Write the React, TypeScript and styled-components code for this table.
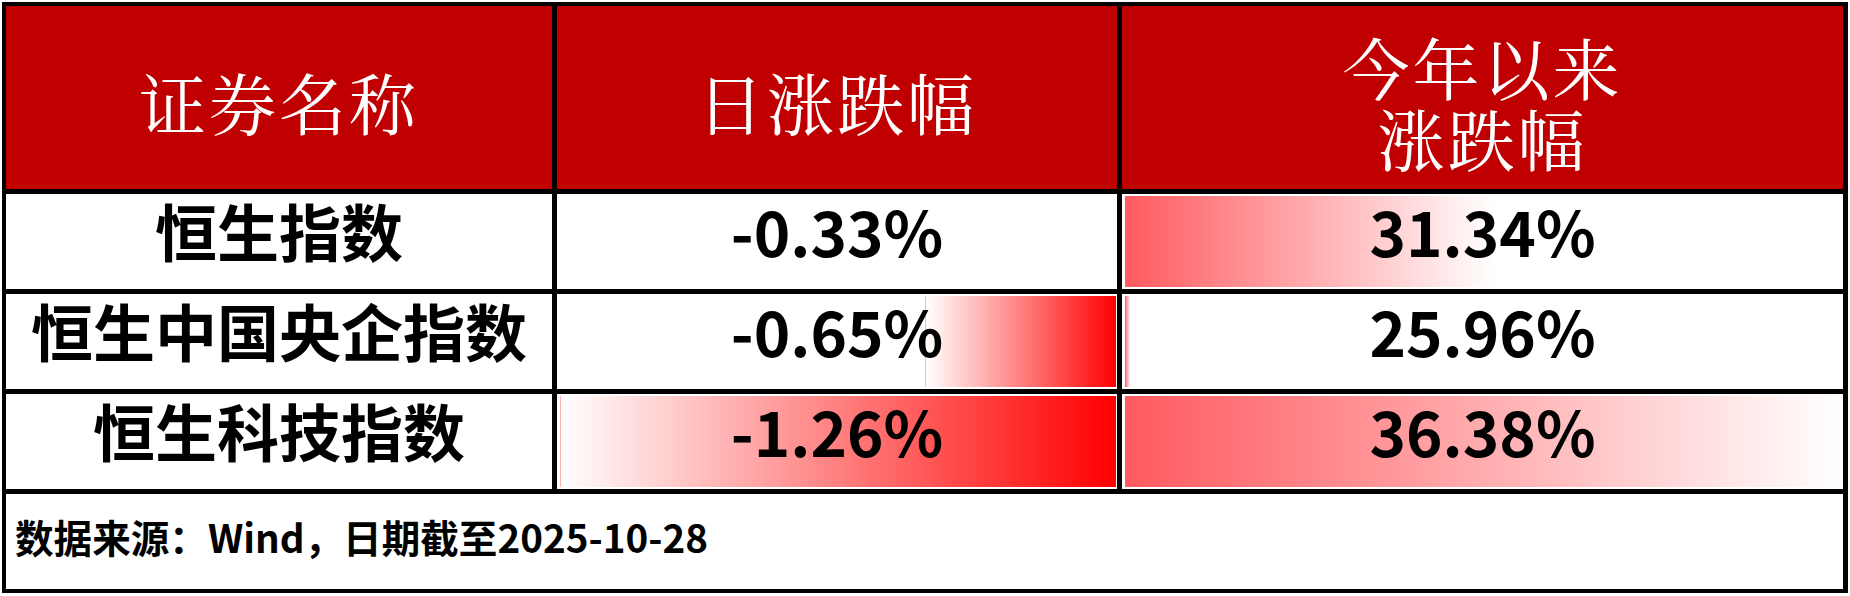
import { Fragment } from "react";
import styled, { createGlobalStyle } from "styled-components";

const GlobalStyle = createGlobalStyle`
  html, body {
    margin: 0;
    padding: 0;
    background: #fff;
  }
`;

const SANS = `"Noto Sans CJK SC", "Noto Sans", sans-serif`;
const SERIF = `"Noto Serif CJK SC", "AR PL UMing CN", "Noto Sans CJK SC", serif`;

const Table = styled.div`
  display: grid;
  grid-template-columns: 546px 560px 721px;
  grid-template-rows: 183px 95px 95px 95px 95px;
  gap: 5px;
  width: max-content;
  margin: 2px 0 0 2px;
  padding: 4px 5px 4px 4px;
  background: #000;
`;

const HeadCell = styled.div`
  display: flex;
  flex-direction: column;
  align-items: center;
  justify-content: center;
  padding-top: 8px;
  box-sizing: border-box;
  background: #c00000;
  color: #fff;
  font-family: ${SERIF};
  font-size: 67px;
  line-height: 71px;
  text-align: center;
  letter-spacing: 3px;
`;

const HeadLine = styled.span`
  display: block;
`;

const Cell = styled.div`
  display: flex;
  justify-content: center;
  align-items: flex-start;
  background-color: #fff;
  background-repeat: no-repeat;
  color: #000;
  font-family: ${SANS};
  font-weight: 700;
  font-size: 62px;
  line-height: 62px;
  padding-top: 5px;
  box-sizing: border-box;
  white-space: nowrap;
`;

const Footer = styled.div`
  grid-column: 1 / -1;
  display: flex;
  align-items: center;
  padding: 0 0 12px 9px;
  background: #fff;
  font-family: ${SANS};
  font-weight: 700;
  font-size: 38.6px;
  color: #000;
`;

type Row = { name: string; day: number; ytd: number };

const rows: Row[] = [
  { name: "恒生指数", day: -0.33, ytd: 31.34 },
  { name: "恒生中国央企指数", day: -0.65, ytd: 25.96 },
  { name: "恒生科技指数", day: -1.26, ytd: 36.38 },
];

const dayMin = Math.min(...rows.map((r) => r.day));
const dayMax = Math.max(...rows.map((r) => r.day));
const ytdMin = Math.min(...rows.map((r) => r.ytd));
const ytdMax = Math.max(...rows.map((r) => r.ytd));

// negative bars grow leftwards from the right edge, red fading to white
function dayStyle(v: number) {
  const w = Math.round(((dayMax - v) / (dayMax - dayMin)) * 556);
  if (w < 2) return {};
  return {
    backgroundImage: `linear-gradient(to right, #ffb4b4 0, #ffb4b4 1px, #ffffff 1px, #ff0000 100%)`,
    backgroundSize: `${w}px calc(100% - 4px)`,
    backgroundPosition: `${559 - w}px 2px`,
  };
}

// positive bars grow rightwards from the left edge
function ytdStyle(v: number) {
  const w = Math.max(5, Math.round(((v - ytdMin) / (ytdMax - ytdMin)) * 715));
  return {
    backgroundImage: `linear-gradient(to right, #ff5a5f, #ffffff)`,
    backgroundSize: `${w}px calc(100% - 4px)`,
    backgroundPosition: `3px 2px`,
  };
}

export default function App() {
  return (
    <>
      <GlobalStyle />
      <Table>
        <HeadCell>证券名称</HeadCell>
        <HeadCell>日涨跌幅</HeadCell>
        <HeadCell>
          <HeadLine>今年以来</HeadLine>
          <HeadLine>涨跌幅</HeadLine>
        </HeadCell>
        {rows.map((r) => (
          <Fragment key={r.name}>
            <Cell>{r.name}</Cell>
            <Cell style={dayStyle(r.day)}>{r.day.toFixed(2)}%</Cell>
            <Cell style={ytdStyle(r.ytd)}>{r.ytd.toFixed(2)}%</Cell>
          </Fragment>
        ))}
        <Footer>数据来源：Wind，日期截至2025-10-28</Footer>
      </Table>
    </>
  );
}
